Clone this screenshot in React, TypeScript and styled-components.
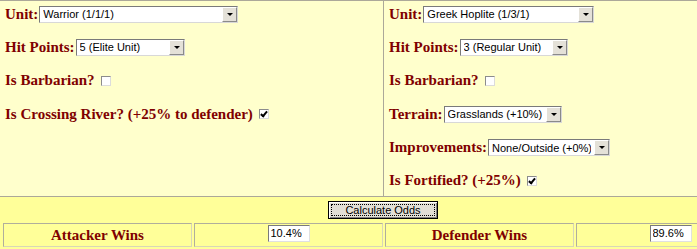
import React from 'react'
import styled, { createGlobalStyle } from 'styled-components'

const GlobalStyle = createGlobalStyle`
    html,
    body {
        margin: 0;
        padding: 0;
        background: #ffff99;
        overflow: hidden;
    }
`

const maroon = '#800000'
const rule = '#aca899'

const Page = styled.div`
    width: 766px;
    font-family: 'Liberation Serif', 'Times New Roman', serif;
`

const Panels = styled.div`
    display: grid;
    grid-template-columns: 383px 1fr;
    height: 197px;
    box-sizing: border-box;
    border-top: 1px solid ${rule};
    border-bottom: 1px solid ${rule};
    background: #ffffcc;
`

const Panel = styled.div<{ $divider?: boolean }>`
    display: flex;
    flex-direction: column;
    gap: 13.4px;
    padding: 3px 0 0 5px;
    border-left: ${(p) => (p.$divider ? `1px solid ${rule}` : 'none')};
`

const Row = styled.div`
    display: flex;
    align-items: center;
    height: 20px;
`

const Label = styled.span`
    color: ${maroon};
    font-size: 15px;
    font-weight: bold;
    white-space: nowrap;
`

const SelectWrap = styled.span<{ $width: number }>`
    position: relative;
    display: inline-flex;
    width: ${(p) => p.$width}px;
    height: 17px;
    margin-left: 1px;
`

const Select = styled.select`
    appearance: none;
    width: 100%;
    height: 100%;
    margin: 0;
    padding: 0 18px 0 3px;
    box-sizing: border-box;
    border: 1px solid;
    border-color: #7a7a7a #d8d8d8 #d8d8d8 #7a7a7a;
    border-radius: 0;
    background: #fff;
    color: #000;
    font-family: 'Liberation Sans', Arial, sans-serif;
    font-size: 11px;
    outline: none;
`

// drop-down button drawn over the right end of the select
const DropButton = styled.span`
    position: absolute;
    top: 1px;
    right: 1px;
    bottom: 1px;
    width: 15px;
    box-sizing: border-box;
    background: #e4e1d8;
    border: 1px solid;
    border-color: #fff #8a8a8a #8a8a8a #fff;
    pointer-events: none;

    &:after {
        content: '';
        position: absolute;
        left: 4px;
        top: 5px;
        border-left: 3px solid transparent;
        border-right: 3px solid transparent;
        border-top: 3px solid #000;
    }
`

const Check = styled.input`
    appearance: none;
    position: relative;
    width: 10px;
    height: 10px;
    margin: 0 0 0 6px;
    box-sizing: border-box;
    border: 1px solid;
    border-color: #8c8c8c #dcdcdc #dcdcdc #8c8c8c;
    background: #fff;

    &:checked:after {
        content: '';
        position: absolute;
        left: 2px;
        top: 0px;
        width: 2px;
        height: 5px;
        border: solid #000;
        border-width: 0 2px 2px 0;
        transform: rotate(40deg);
    }
`

const ButtonRow = styled.div`
    display: flex;
    justify-content: center;
    padding: 4px 0;
`

const CalcButton = styled.button`
    position: relative;
    width: 110px;
    height: 18px;
    padding: 0;
    border: 1px solid #000;
    background: #e2dfd6;
    box-shadow: inset 1px 1px #fff, inset -1px -1px #808080;
    font-family: 'Liberation Sans', Arial, sans-serif;
    font-size: 11px;
    color: #000;

    &:before {
        content: '';
        position: absolute;
        inset: 2px;
        border: 1px dotted #000;
    }
`

const Results = styled.div`
    display: grid;
    grid-template-columns: repeat(4, 189px);
    gap: 2px;
    padding-left: 3px;
`

const ResultCell = styled.div`
    display: flex;
    align-items: center;
    justify-content: center;
    height: 24px;
    box-sizing: border-box;
    border: 1px solid;
    border-color: #b0ae9c #d8d6b8 #d8d6b8 #b0ae9c;
`

const ResultInput = styled.input`
    width: 42px;
    height: 17px;
    margin: -4px 0 0;
    padding: 0 0 0 2px;
    box-sizing: border-box;
    border: 1px solid;
    border-color: #7a7a7a #e0e0e0 #e0e0e0 #7a7a7a;
    background: #fff;
    font-family: 'Liberation Sans', Arial, sans-serif;
    font-size: 11px;
    color: #000;
`

type Option = { width: number; value: string }

const Dropdown = ({ width, value }: Option) => (
    <SelectWrap $width={width}>
        <Select defaultValue={value}>
            <option>{value}</option>
        </Select>
        <DropButton />
    </SelectWrap>
)

export default function App() {
    return (
        <Page>
            <GlobalStyle />
            <Panels>
                <Panel>
                    <Row>
                        <Label>Unit:</Label>
                        <Dropdown width={199} value="Warrior (1/1/1)" />
                    </Row>
                    <Row>
                        <Label>Hit Points:</Label>
                        <Dropdown width={109} value="5 (Elite Unit)" />
                    </Row>
                    <Row>
                        <Label>Is Barbarian?</Label>
                        <Check type="checkbox" />
                    </Row>
                    <Row>
                        <Label>Is Crossing River? (+25% to defender)</Label>
                        <Check type="checkbox" defaultChecked />
                    </Row>
                </Panel>
                <Panel $divider>
                    <Row>
                        <Label>Unit:</Label>
                        <Dropdown width={171} value="Greek Hoplite (1/3/1)" />
                    </Row>
                    <Row>
                        <Label>Hit Points:</Label>
                        <Dropdown width={108} value="3 (Regular Unit)" />
                    </Row>
                    <Row>
                        <Label>Is Barbarian?</Label>
                        <Check type="checkbox" />
                    </Row>
                    <Row>
                        <Label>Terrain:</Label>
                        <Dropdown width={118} value="Grasslands (+10%)" />
                    </Row>
                    <Row>
                        <Label>Improvements:</Label>
                        <Dropdown width={122} value="None/Outside (+0%)" />
                    </Row>
                    <Row>
                        <Label>Is Fortified? (+25%)</Label>
                        <Check type="checkbox" defaultChecked />
                    </Row>
                </Panel>
            </Panels>
            <ButtonRow>
                <CalcButton type="button">Calculate Odds</CalcButton>
            </ButtonRow>
            <Results>
                <ResultCell>
                    <Label>Attacker Wins</Label>
                </ResultCell>
                <ResultCell>
                    <ResultInput readOnly value="10.4%" />
                </ResultCell>
                <ResultCell>
                    <Label>Defender Wins</Label>
                </ResultCell>
                <ResultCell>
                    <ResultInput readOnly value="89.6%" />
                </ResultCell>
            </Results>
        </Page>
    )
}
